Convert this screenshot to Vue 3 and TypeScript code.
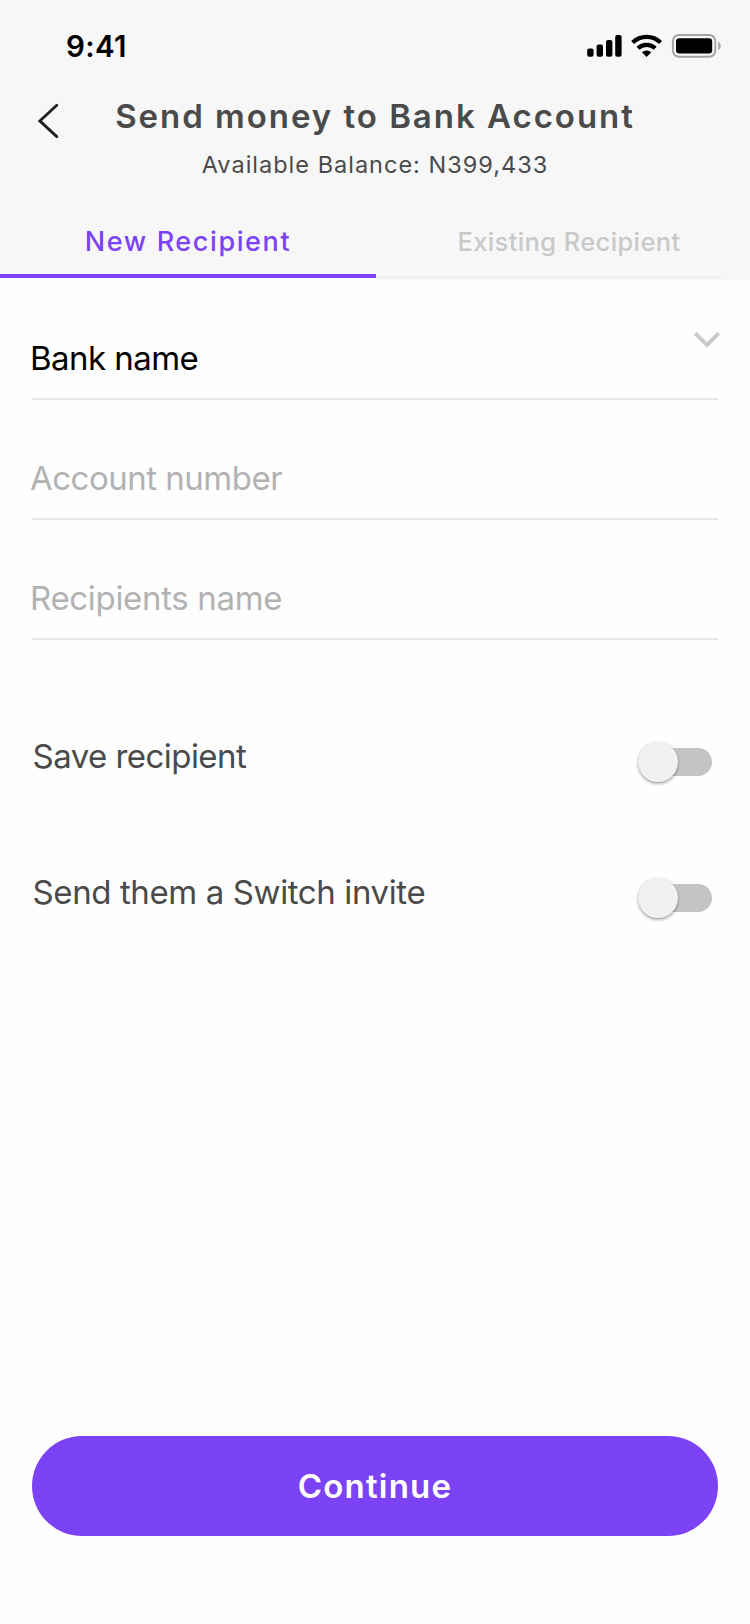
<script setup lang="ts">
import { ref } from 'vue'

interface Field { id: string; label: string; filled: boolean; picker: boolean; cls: string }
interface Option { id: string; label: string; cls: string }

const fields: Field[] = [
  { id: 'bank', label: 'Bank name', filled: true, picker: true, cls: 'f-bank' },
  { id: 'account', label: 'Account number', filled: false, picker: false, cls: 'f-account' },
  { id: 'recipient', label: 'Recipients name', filled: false, picker: false, cls: 'f-recipient' },
]
const options: Option[] = [
  { id: 'save', label: 'Save recipient', cls: 'o-save' },
  { id: 'invite', label: 'Send them a Switch invite', cls: 'o-invite' },
]
const enabled = ref<Record<string, boolean>>({ save: false, invite: false })
const toggle = (id: string) => { enabled.value[id] = !enabled.value[id] }
</script>

<template>
  <div class="screen">
    <header class="header">
      <div class="status">
        <span class="time">9:41</span>
        <svg class="indicators" width="136" height="26" viewBox="586 33 136 26">
          <rect x="587.2" y="48.6" width="6.4" height="8.2" rx="2" />
          <rect x="596.6" y="44.6" width="6.4" height="12.2" rx="2" />
          <rect x="606" y="40" width="6.4" height="16.8" rx="2" />
          <rect x="615.2" y="35" width="6.4" height="21.8" rx="2" />
          <g fill="none" stroke="#000" stroke-width="4.2">
            <path d="M632.6 42.6 A20 20 0 0 1 660.6 42.6" />
            <path d="M638 48.3 A12.3 12.3 0 0 1 655.2 48.3" />
          </g>
          <path d="M646.6 57 L641.9 52.2 A7 7 0 0 1 651.3 52.2 Z" />
          <rect x="672.9" y="35" width="42.4" height="21.8" rx="6" fill="none" stroke="#a3a3a3" stroke-width="2" />
          <rect x="676" y="38.3" width="36.2" height="15.2" rx="3.2" />
          <path d="M718.2 41.8 C721.6 43.3 721.6 48.5 718.2 50 Z" fill="#a3a3a3" />
        </svg>
      </div>
      <div class="heading">
        <button class="back" aria-label="Back">
          <svg width="22" height="36" viewBox="37 103 22 36">
            <path d="M56.8 105.2 L39.8 120.9 L56.8 136.6" fill="none" stroke="#1f1f1f" stroke-width="2.8" stroke-linecap="round" />
          </svg>
        </button>
        <div class="titles">
          <h1>Send money to Bank Account</h1>
          <p>Available Balance: N399,433</p>
        </div>
      </div>
      <nav class="tabs">
        <div class="tab active"><span>New Recipient</span></div>
        <div class="tab"><span>Existing Recipient</span></div>
      </nav>
    </header>

    <main class="content">
      <section class="fields">
        <div v-for="f in fields" :key="f.id" class="field" :class="[f.cls, { filled: f.filled }]">
          <span class="label">{{ f.label }}</span>
          <svg v-if="f.picker" class="chevron" width="26" height="18" viewBox="694 331 26 18">
            <path d="M695.2 333.2 L707 345 L718.8 333.2" fill="none" stroke="#cacaca" stroke-width="4" />
          </svg>
        </div>
      </section>
      <section class="options">
        <div v-for="o in options" :key="o.id" class="option" :class="o.cls">
          <span class="label">{{ o.label }}</span>
          <button class="switch" :class="{ on: enabled[o.id] }" @click="toggle(o.id)">
            <span class="knob"></span>
          </button>
        </div>
      </section>
      <button class="continue"><span>Continue</span></button>
    </main>
  </div>
</template>

<style>
html, body { margin: 0; background: #fefefe; }
</style>

<style scoped>
* { box-sizing: border-box; }
.screen {
  width: 750px; height: 1624px; background: #fefefe; color: #4a4a4a;
  font-family: Inter, "Liberation Sans", sans-serif;
  display: flex; flex-direction: column; overflow: hidden; white-space: nowrap;
}
button { border: 0; padding: 0; margin: 0; background: none; font: inherit; }
svg { display: block; }
.header { height: 278px; background: #f7f7f7; display: flex; flex-direction: column; flex: none; }
.status { height: 92px; padding: 0 28px 0 66px; display: flex; justify-content: space-between; align-items: center; }
.time { font-size: 29.5px; line-height: 34px; font-weight: 600; color: #000; letter-spacing: 0.3px; }
.heading { height: 114px; display: flex; }
.back { width: 59px; height: 60px; padding: 11px 0 0 37px; display: flex; align-items: flex-start; }
.titles { width: 632px; text-align: center; }
h1 { margin: 4px 0 0; font-size: 33px; line-height: 40px; font-weight: 600; letter-spacing: 1.97px; }
p { margin: 14px 0 0; font-size: 23.5px; line-height: 30px; letter-spacing: 1px; }
.tabs { height: 72px; display: flex; }
.tab {
  flex: 1; padding-left: 12px; text-align: center; color: #c9c9c9;
  font-size: 25.5px; line-height: 72px; font-weight: 500; letter-spacing: 0.38px;
  background: linear-gradient(#efefef, #efefef) 0 100% / 346px 2px no-repeat;
  box-shadow: 0 2px 0 #f7f7f7;
}
.tab.active {
  flex: none; width: 376px; padding: 0; color: #7b42f6;
  font-size: 27px; line-height: 71px; letter-spacing: 1.6px;
  background: none; box-shadow: none; border-bottom: 4px solid #7b42f6;
}
.content { flex: 1; display: flex; flex-direction: column; padding: 2px 32px 88px; }
.field { height: 120px; padding-top: 58px; border-bottom: 2px solid #e5e5ea; display: flex; justify-content: space-between; color: #b2b2b2; }
.field.filled { color: #000; }
.field .label { font-size: 33px; line-height: 40px; margin-left: -2px; }
.f-bank .label { letter-spacing: -0.55px; }
.f-account .label { letter-spacing: -0.5px; }
.f-recipient .label { letter-spacing: -0.33px; }
.chevron { margin: -7px -2px 0 0; }
.options { padding-top: 88px; display: flex; flex-direction: column; gap: 68px; }
.option { height: 68px; display: flex; justify-content: space-between; align-items: center; padding-right: 6px; }
.option .label { font-size: 33px; line-height: 56px; height: 68px; margin-left: 0.5px; }
.o-save .label { letter-spacing: -0.54px; }
.o-invite .label { letter-spacing: -0.39px; }
.switch { width: 70px; height: 28px; border-radius: 14px; background: #c4c4c4; display: flex; align-items: center; }
.knob { width: 40px; height: 40px; margin-left: -4px; border-radius: 50%; background: #f1f1f1; box-shadow: 0 2px 3px rgba(0, 0, 0, .3), 0 0 2px rgba(0, 0, 0, .15); flex: none; }
.switch.on { background: #b99af9; justify-content: flex-end; }
.continue { margin-top: auto; height: 100px; border-radius: 50px; background: #7b42f6; color: #fff; font-size: 33px; font-weight: 600; letter-spacing: 1.2px; line-height: 100px; }
</style>
